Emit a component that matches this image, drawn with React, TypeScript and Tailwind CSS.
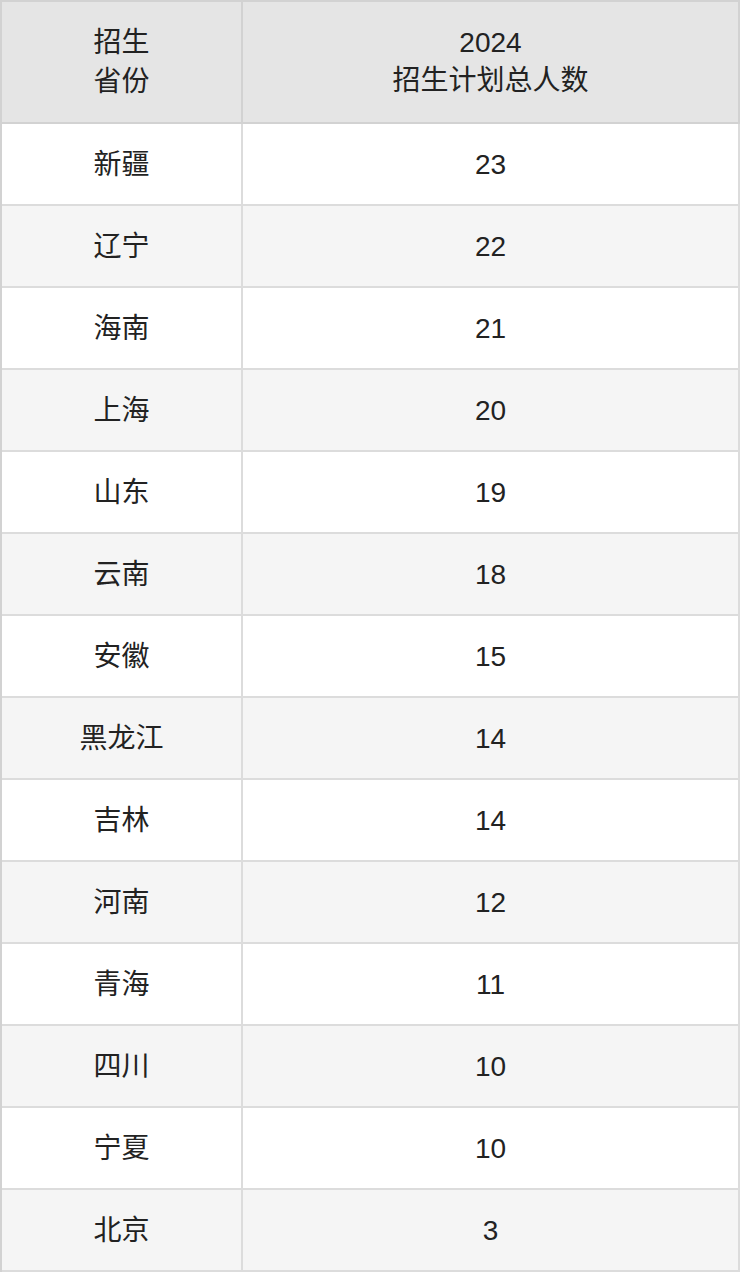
import * as React from 'react'

interface PlanRow {
  province: string
  total: number
}

const rows: PlanRow[] = [
  { province: '新疆', total: 23 },
  { province: '辽宁', total: 22 },
  { province: '海南', total: 21 },
  { province: '上海', total: 20 },
  { province: '山东', total: 19 },
  { province: '云南', total: 18 },
  { province: '安徽', total: 15 },
  { province: '黑龙江', total: 14 },
  { province: '吉林', total: 14 },
  { province: '河南', total: 12 },
  { province: '青海', total: 11 },
  { province: '四川', total: 10 },
  { province: '宁夏', total: 10 },
  { province: '北京', total: 3 },
]

export default function App() {
  return (
    <div
      className="w-[740px] bg-white text-[28px] leading-[37px] text-[#222]"
      style={{ fontFamily: '"Liberation Sans", Arial, "Noto Sans CJK SC", sans-serif' }}
    >
      <div className="grid grid-cols-[241px_1fr] border-l-2 border-t-2 border-[#d2d2d2]">
        {/* Header */}
        <div className="flex h-[122px] flex-col items-center justify-center border-r-2 border-b-2 border-[#d2d2d2] bg-[#e5e5e5] leading-[39px]">
          <span>招生</span>
          <span>省份</span>
        </div>
        <div className="flex h-[122px] flex-col items-center justify-center border-r-2 border-b-2 border-[#d2d2d2] bg-[#e5e5e5] leading-[38px]">
          <span>2024</span>
          <span>招生计划总人数</span>
        </div>

        {/* Body */}
        {rows.map((row, i) => (
          <React.Fragment key={row.province}>
            <div
              className={`flex h-[82px] items-center justify-center border-r-2 border-b-2 border-[#dcdcdc] ${
                i % 2 === 1 ? 'bg-[#f5f5f5]' : 'bg-white'
              }`}
            >
              {row.province}
            </div>
            <div
              className={`flex h-[82px] items-center justify-center border-r-2 border-b-2 border-[#dcdcdc] ${
                i % 2 === 1 ? 'bg-[#f5f5f5]' : 'bg-white'
              }`}
            >
              {row.total}
            </div>
          </React.Fragment>
        ))}
      </div>
    </div>
  )
}
